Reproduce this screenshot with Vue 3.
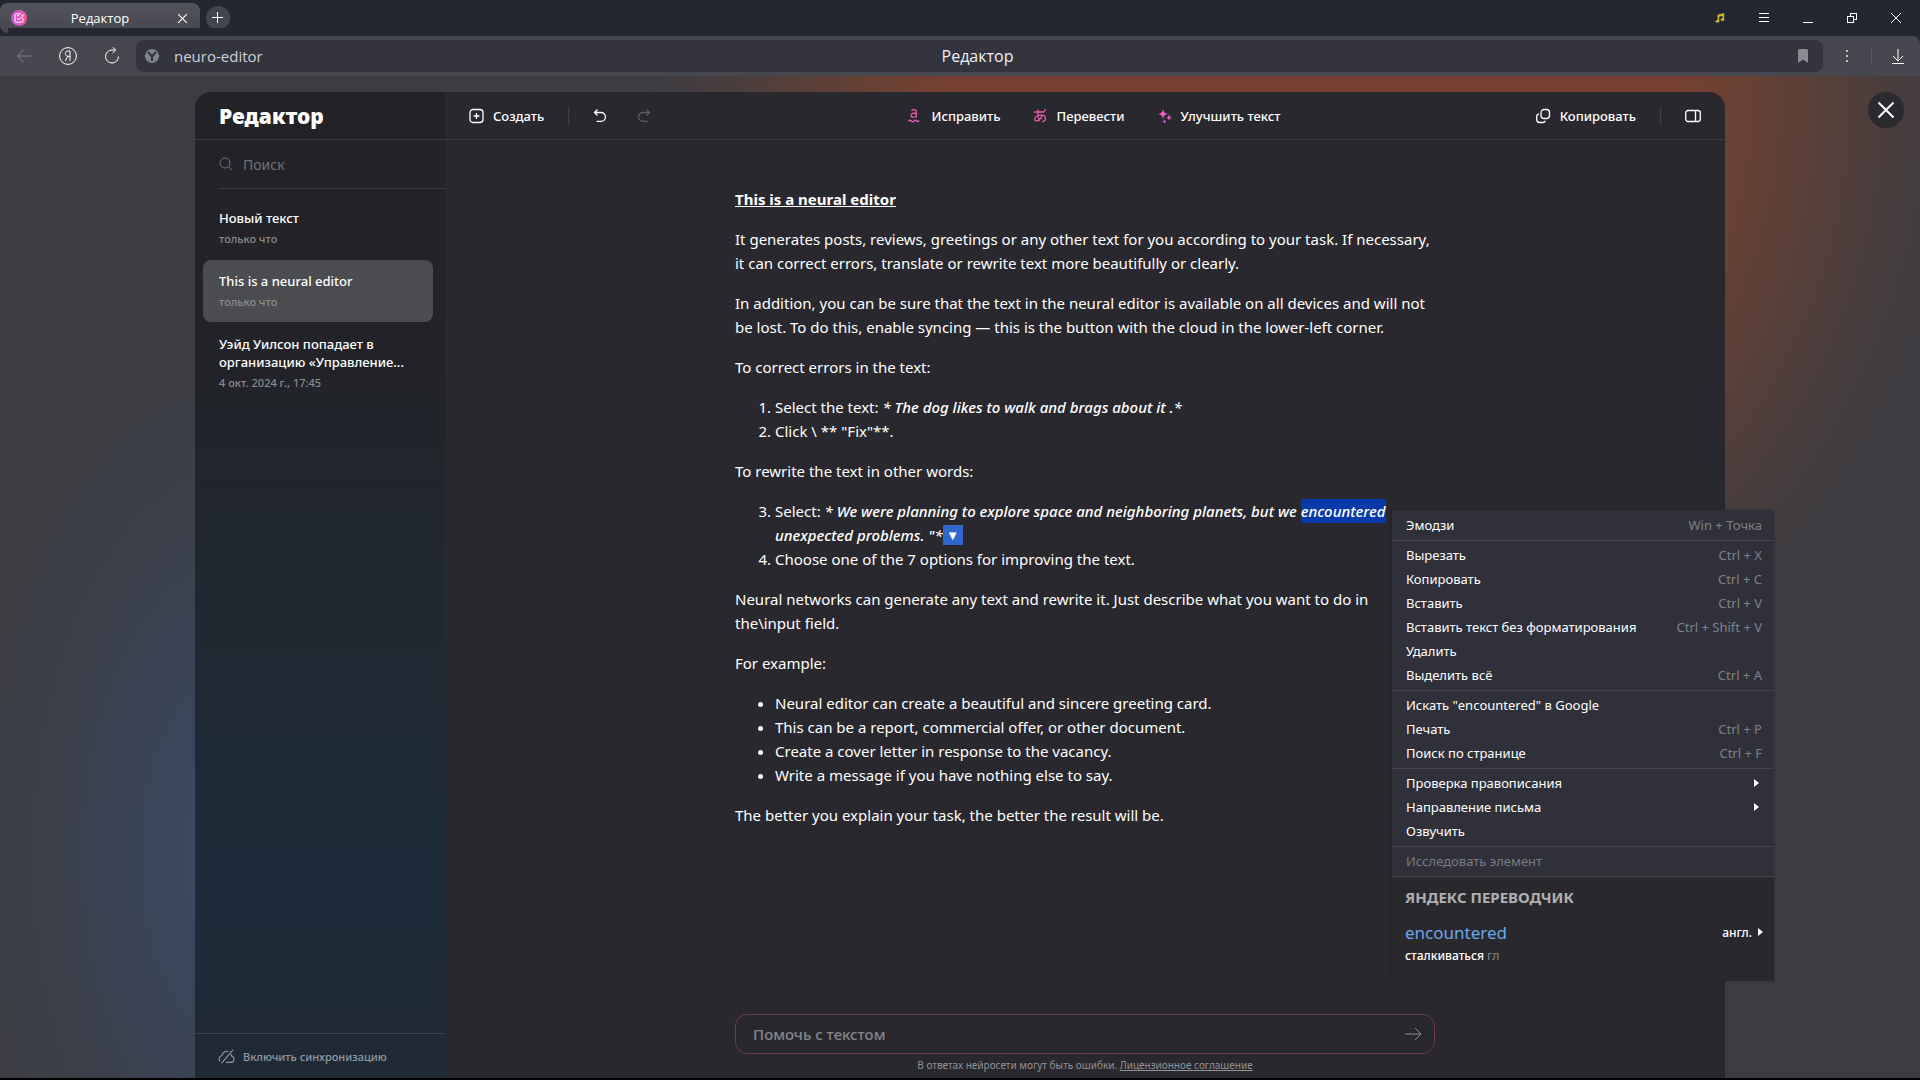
<template>
  <div class="page">
    <div class="titlebar">
      <div class="tab">
        <svg class="favicon" viewBox="0 0 16 16">
          <defs>
            <linearGradient id="fav" x1="0" y1="0" x2="1" y2="0">
              <stop offset="0" stop-color="#c455e0" />
              <stop offset="1" stop-color="#f7568f" />
            </linearGradient>
          </defs>
          <circle class="disc" cx="8" cy="8" r="8" />
          <path d="M12 8v3.2a1 1 0 0 1-1 1H5a1 1 0 0 1-1-1V4.8a1 1 0 0 1 1-1h5M6 5.8h2.4M6 8l1.8 2L13 4.4M10.6 4.6l1.4 1.6" />
        </svg>
        <span class="tab-title">Редактор</span>
        <button class="tab-close" aria-label="Закрыть вкладку">
          <svg viewBox="0 0 10 10"><path d="M1 1l8 8M9 1l-8 8" /></svg>
        </button>
      </div>
      <button class="new-tab" aria-label="Новая вкладка">
        <svg class="crisp" viewBox="0 0 12 12"><path d="M5.500 0v11M0 5.500h11" /></svg>
      </button>
      <div class="window-controls">
        <button aria-label="Музыка">
          <svg class="music" viewBox="0 0 12 12">
            <path d="M3 2.200L11 0v3L5 4.600V10H3z" />
            <path d="M9 2h2v6H9z" />
            <ellipse cx="3" cy="10" rx="2.200" ry="1.700" />
            <ellipse cx="9" cy="8" rx="2.200" ry="1.700" />
          </svg>
        </button>
        <button aria-label="Меню">
          <svg class="crisp" viewBox="0 0 12 12"><path d="M1 1.500h10M1 5.500h10M1 9.500h10" /></svg>
        </button>
        <button aria-label="Свернуть">
          <svg class="crisp" viewBox="0 0 12 12"><path d="M1 10.500h10" /></svg>
        </button>
        <button aria-label="Развернуть">
          <svg class="crisp" viewBox="0 0 12 12"><path d="M4.500 4V1.500h6v6H8M1.500 4.500h6v6h-6z" /></svg>
        </button>
        <button aria-label="Закрыть окно">
          <svg viewBox="0 0 12 12"><path d="M1 1l10 10M11 1L1 11" /></svg>
        </button>
      </div>
    </div>

    <div class="toolbar">
      <button class="nav back" aria-label="Назад">
        <svg viewBox="0 0 18 18"><path d="M16 9H3M8.500 3L2.500 9l6 6" /></svg>
      </button>
      <button class="nav" aria-label="Яндекс">
        <svg viewBox="0 0 18 18">
          <circle cx="9" cy="9" r="8.400" />
          <path d="M11 14V4H9.200C7.400 4 6.400 5 6.400 6.600S7.400 9.300 9 9.300h2M8.800 9.500L6.200 14" />
        </svg>
      </button>
      <button class="nav" aria-label="Обновить">
        <svg viewBox="0 0 18 18"><path d="M15.500 9.500A6.500 6.500 0 1 1 9 3h3.500M9.500 0l3.200 3-3.200 3" /></svg>
      </button>
      <div class="address">
        <svg class="site" viewBox="0 0 14 14">
          <circle cx="7" cy="7" r="7" />
          <path d="M3 3l4 4.500L11 3M7 7v5" />
        </svg>
        <input class="url" v-model="url" aria-label="Адрес">
        <span class="page-title">Редактор</span>
        <svg class="bookmark" viewBox="0 0 10 14"><path d="M1.500 0h7A1.500 1.500 0 0 1 10 1.500V14L5 10.500 0 14V1.500A1.500 1.500 0 0 1 1.500 0z" /></svg>
      </div>
      <button class="nav more" aria-label="Ещё">
        <svg viewBox="0 0 18 18"><path d="M8 3h2v2H8zM8 8h2v2H8zM8 13h2v2H8z" /></svg>
      </button>
      <span class="separator"></span>
      <button class="nav downloads" aria-label="Загрузки">
        <svg viewBox="0 0 18 18"><path d="M9 2v12M4 9l5 5 5-5M3 16.500h12" /></svg>
      </button>
    </div>

    <div class="stage">
      <main class="editor">
        <aside class="sidebar">
          <h1 class="brand">Редактор</h1>
          <label class="search">
            <svg viewBox="0 0 14 14"><circle cx="6" cy="6" r="5" /><path d="M9.700 9.700l3.500 3.500" /></svg>
            <input type="text" placeholder="Поиск" v-model="query" aria-label="Поиск">
          </label>
          <div class="docs">
            <button
              v-for="(doc, i) in docs"
              :key="doc.title"
              class="doc"
              :class="{ active: i === current }"
              @click="current = i"
            >
              <span class="doc-title">{{ doc.title }}</span>
              <span class="doc-date">{{ doc.date }}</span>
            </button>
          </div>
          <button class="sync">
            <svg viewBox="0 0 16 14"><path d="M7.500 12.500H12a3 3 0 0 0 .8-5.900 5 5 0 0 0-.6-1.900M10 2.200A5 5 0 0 0 3.700 6 3.300 3.300 0 0 0 2 11.600M14 .8L3.500 13.300" /></svg>
            Включить синхронизацию
          </button>
        </aside>

        <section class="workspace">
          <header class="actions">
            <div class="group">
              <button class="action">
                <svg viewBox="0 0 16 16"><rect x="1" y="1.500" width="13" height="13" rx="3" /><path d="M7.500 5v6M4.500 8h6" /></svg>
                Создать
              </button>
              <span class="divider"></span>
              <button class="action icon" aria-label="Отменить">
                <svg viewBox="0 0 16 16"><path d="M4.500 1.500l-3 3 3 3M1.500 4.500H8a4.400 4.400 0 0 1 0 8.800H3.500" /></svg>
              </button>
              <button class="action icon off" aria-label="Повторить">
                <svg viewBox="0 0 16 16"><path d="M9.500 1.500l3 3-3 3M12.500 4.500H6a4.400 4.400 0 0 0 0 8.800h4.500" /></svg>
              </button>
            </div>
            <div class="group tools">
              <button class="action">
                <svg class="pink" viewBox="0 0 16 16"><path d="M4.500 2.800C5.500 1.300 9.300 1 9.300 4v5.600M9.300 5C6.500 5 4 5.300 4 7.500c0 2.300 3.800 2.500 5.300 0M1.500 13q1.400-1.500 2.800 0t2.800 0 2.800 0 2.100-.5" /></svg>
                Исправить
              </button>
              <button class="action">
                <svg class="pink" viewBox="0 0 16 16"><path d="M1 4h10M5 1.500C4.700 6 5 10 6.600 13M9.500 6.500C8.500 10.500 5.500 13 3.500 13 1 13 1 9.500 4 8c3.500-1.800 8.500-1 8.500 2.200 0 2-1.200 3.200-3.400 3.500M12.500 1l-1.500 3" /></svg>
                Перевести
              </button>
              <button class="action">
                <svg class="pink sparkles" viewBox="0 0 16 16">
                  <path d="M6 1q.7 4.300 5 5-4.300.7-5 5-.7-4.300-5-5 4.300-.7 5-5z" />
                  <path d="M12 6.500q.4 2.600 3 3-2.600.4-3 3-.4-2.600-3-3 2.600-.4 3-3z" />
                  <path d="M7.500 11.500q.3 1.700 2 2-1.700.3-2 2-.3-1.700-2-2 1.700-.3 2-2z" />
                </svg>
                Улучшить текст
              </button>
            </div>
            <div class="group end">
              <button class="action">
                <svg viewBox="0 0 16 16"><rect x="5" y="1.500" width="8.500" height="9" rx="3" /><path d="M3 5.800A2.800 2.800 0 0 0 .7 8.500v3a3 3 0 0 0 3 3h2.600a3 3 0 0 0 3-1.600" /></svg>
                Копировать
              </button>
              <span class="divider"></span>
              <button class="action icon" aria-label="Боковая панель">
                <svg viewBox="0 0 16 16"><rect x=".7" y="2.500" width="14.600" height="11" rx="2.500" /><path d="M10.500 2.500v11" /></svg>
              </button>
            </div>
          </header>

          <article class="document">
            <p><strong>This is a neural editor</strong></p>
            <p>It generates posts, reviews, greetings or any other text for you according to your task. If necessary,<br>it can correct errors, translate or rewrite text more beautifully or clearly.</p>
            <p>In addition, you can be sure that the text in the neural editor is available on all devices and will not<br>be lost. To do this, enable syncing — this is the button with the cloud in the lower-left corner.</p>
            <p>To correct errors in the text:</p>
            <ol>
              <li>Select the text: <em>* The dog likes to walk and brags about it .*</em></li>
              <li>Click \ ** "Fix"**.</li>
            </ol>
            <p>To rewrite the text in other words:</p>
            <ol start="3">
              <li>Select: <em>* We were planning to explore space and neighboring planets, but we <mark>encountered</mark><br>unexpected problems. "*</em><button class="translate" aria-label="Перевод">▼</button></li>
              <li>Choose one of the 7 options for improving the text.</li>
            </ol>
            <p>Neural networks can generate any text and rewrite it. Just describe what you want to do in<br>the\input field.</p>
            <p>For example:</p>
            <ul>
              <li>Neural editor can create a beautiful and sincere greeting card.</li>
              <li>This can be a report, commercial offer, or other document.</li>
              <li>Create a cover letter in response to the vacancy.</li>
              <li>Write a message if you have nothing else to say.</li>
            </ul>
            <p>The better you explain your task, the better the result will be.</p>
          </article>

          <footer class="prompt">
            <form class="prompt-box" @submit.prevent>
              <input type="text" placeholder="Помочь с текстом" v-model="prompt" aria-label="Помочь с текстом">
              <button aria-label="Отправить">
                <svg viewBox="0 0 18 16"><path d="M1 8h16M11 2l6 6-6 6" /></svg>
              </button>
            </form>
            <p class="legal">В ответах нейросети могут быть ошибки. <a href="#">Лицензионное соглашение</a></p>
          </footer>
        </section>
      </main>
      <button class="close" aria-label="Закрыть">
        <svg viewBox="0 0 18 18"><path d="M1.500 1.500l15 15M16.500 1.500l-15 15" /></svg>
      </button>
    </div>

    <div class="context-menu" role="menu">
      <div v-for="(group, g) in menu" :key="g" class="menu-group">
        <button
          v-for="item in group"
          :key="item.label"
          class="menu-item"
          role="menuitem"
          :disabled="item.disabled"
        >
          <span>{{ item.label }}</span>
          <span v-if="item.keys" class="keys">{{ item.keys }}</span>
          <span v-if="item.sub" class="arrow"></span>
        </button>
      </div>
      <div class="translator">
        <h2>ЯНДЕКС ПЕРЕВОДЧИК</h2>
        <div class="word">
          <a href="#">encountered</a>
          <button class="lang">англ.<span class="arrow"></span></button>
        </div>
        <p class="meaning">сталкиваться <span>гл</span></p>
      </div>
    </div>
  </div>
</template>

<script setup>
import { ref } from 'vue'

const url = ref('neuro-editor')
const query = ref('')
const prompt = ref('')
const current = ref(1)

const docs = [
  { title: 'Новый текст', date: 'только что' },
  { title: 'This is a neural editor', date: 'только что' },
  { title: 'Уэйд Уилсон попадает в организацию «Управление...', date: '4 окт. 2024 г., 17:45' }
]

const menu = [
  [{ label: 'Эмодзи', keys: 'Win + Точка' }],
  [
    { label: 'Вырезать', keys: 'Ctrl + X' },
    { label: 'Копировать', keys: 'Ctrl + C' },
    { label: 'Вставить', keys: 'Ctrl + V' },
    { label: 'Вставить текст без форматирования', keys: 'Ctrl + Shift + V' },
    { label: 'Удалить' },
    { label: 'Выделить всё', keys: 'Ctrl + A' }
  ],
  [
    { label: 'Искать "encountered" в Google' },
    { label: 'Печать', keys: 'Ctrl + P' },
    { label: 'Поиск по странице', keys: 'Ctrl + F' }
  ],
  [
    { label: 'Проверка правописания', sub: true },
    { label: 'Направление письма', sub: true },
    { label: 'Озвучить' }
  ],
  [{ label: 'Исследовать элемент', disabled: true }]
]
</script>

<style>
body {
  background: #000;
}
</style>

<style scoped>
* {
  box-sizing: border-box;
}

.page {
  position: relative;
  display: flex;
  flex-direction: column;
  min-height: 100vh;
  padding-bottom: 2px;
  color: #fff;
  font-family: "Noto Sans", sans-serif;
  font-size: 14px;
}

button,
input {
  margin: 0;
  padding: 0;
  border: 0;
  outline: 0;
  background: none;
  color: inherit;
  font: inherit;
}

svg {
  flex: none;
  fill: none;
  stroke: currentColor;
}

/* Browser chrome */
.titlebar {
  display: flex;
  align-items: center;
  height: 36px;
  background: #242630;
}

.tab {
  display: flex;
  align-items: center;
  width: 200px;
  height: 30px;
  padding: 0 12px 0 11px;
  border-radius: 8px;
  background: linear-gradient(#54545c, #46464f);
}

.favicon {
  width: 16px;
  height: 16px;
}

.disc {
  fill: url(#fav);
  stroke: none;
}

.tab-title {
  flex: 1;
  padding-right: 4px;
  text-align: center;
  font-family: "Open Sans", sans-serif;
  font-size: 13px;
}

.tab-close {
  display: flex;
}

.tab-close svg {
  width: 11px;
  height: 11px;
}

.new-tab {
  display: grid;
  place-items: center;
  width: 24px;
  height: 24px;
  margin-left: 6px;
  border-radius: 50%;
  background: #43464f;
}

.new-tab svg {
  width: 12px;
  height: 12px;
}

.window-controls {
  display: flex;
  margin-left: auto;
  padding-right: 2px;
}

.window-controls button {
  display: grid;
  place-items: center;
  width: 44px;
  height: 36px;
}

.window-controls svg {
  width: 12px;
  height: 12px;
}

.crisp {
  shape-rendering: crispEdges;
}

.window-controls .music {
  width: 10px;
  height: 10px;
  fill: #c9b62c;
  stroke: none;
  overflow: visible;
}

.toolbar {
  display: flex;
  align-items: center;
  height: 40px;
  padding-left: 2px;
  border-top-right-radius: 8px;
  background: #474750;
  box-shadow: 8px -8px 0 #242630;
}

.nav {
  display: grid;
  place-items: center;
  width: 44px;
  height: 40px;
}

.nav svg {
  width: 18px;
  height: 18px;
}

.back {
  color: #85858c;
}

.address {
  display: grid;
  flex: 1;
  grid-template-columns: 38px 1fr auto 1fr 42px;
  align-items: center;
  height: 32px;
  margin-left: 2px;
  border-radius: 8px;
  background: #33343d;
  font-family: "Open Sans", sans-serif;
  font-size: 15px;
  line-height: 20px;
  color: #d2d3d8;
}

.site {
  width: 14px;
  height: 14px;
  margin-left: 9px;
}

.site circle {
  fill: #7e8490;
  stroke: none;
}

.site path {
  stroke: #30333d;
  stroke-width: 2;
}

.url {
  min-width: 0;
}

.page-title {
  color: #f0f0f2;
  font-size: 16px;
}

.bookmark {
  grid-column: 5;
  width: 10px;
  height: 14px;
  margin-left: 17px;
  fill: #8b8b91;
  stroke: none;
}

.more {
  width: 48px;
}

.more svg {
  fill: #c4c4c8;
  stroke: none;
}

.separator {
  width: 1px;
  height: 18px;
  margin-right: 4px;
  background: #5a5a63;
}

/* Page area */
.stage {
  position: relative;
  display: flex;
  flex: 1;
  padding: 16px 195px 0;
  background:
    radial-gradient(660px 680px at 1310px 20px, #75402f 0%, #75402f 55%, rgba(113, 66, 48, 0.85) 65%, rgba(100, 64, 52, 0.3) 88%, rgba(90, 62, 58, 0) 100%),
    radial-gradient(340px 640px at 240px 780px, #3b4a66 0%, rgba(57, 70, 92, 0.75) 35%, rgba(58, 66, 78, 0.35) 65%, rgba(60, 60, 68, 0) 100%),
    #3d3c41;
}

.editor {
  display: flex;
  flex: 1;
  border-radius: 16px 16px 0 0;
  background: #29282e;
  overflow: hidden;
}

.sidebar {
  display: flex;
  flex-direction: column;
  width: 250px;
  background: linear-gradient(#232227 0%, #222329 28%, #1f2932 55%, #1d2b3a 80%, #202a35 100%);
}

.brand {
  display: flex;
  align-items: center;
  height: 48px;
  margin: 0;
  padding-left: 24px;
  border-bottom: 1px solid #3d3d42;
  font-size: 21px;
  font-weight: 900;
}

.search {
  display: flex;
  align-items: center;
  gap: 10px;
  height: 49px;
  margin-left: 24px;
  border-bottom: 1px solid #3d3d42;
  color: #77777b;
}

.search svg {
  width: 14px;
  height: 14px;
}

.search input {
  min-width: 0;
}

.search input::placeholder {
  color: #707074;
  opacity: 1;
}

.docs {
  display: flex;
  flex: 1;
  flex-direction: column;
  gap: 1px;
  padding: 8px 12px 0 8px;
}

.doc {
  padding: 12px 16px;
  border-radius: 8px;
  text-align: left;
}

.doc.active {
  background: #4b4c4f;
}

.doc-title {
  display: block;
  font-size: 13px;
  font-weight: 500;
  line-height: 18px;
}

.doc-date {
  display: block;
  padding-top: 3px;
  color: #8b8c90;
  font-size: 11px;
  font-weight: 500;
  line-height: 17px;
}

.sync {
  display: flex;
  align-items: center;
  gap: 8px;
  height: 45px;
  padding-left: 23px;
  border-top: 1px solid #36424e;
  color: #929aa3;
  font-size: 11px;
  font-weight: 500;
}

.sync svg {
  width: 17px;
  height: 15px;
}

.workspace {
  display: flex;
  flex: 1;
  flex-direction: column;
  min-width: 0;
}

.actions {
  display: grid;
  grid-template-columns: 1fr auto 1fr;
  align-items: center;
  height: 48px;
  padding: 0 24px;
  border-bottom: 1px solid #3a3a40;
}

.group {
  display: flex;
  align-items: center;
}

.tools {
  gap: 32px;
  padding-left: 18px;
}

.end {
  justify-content: flex-end;
}

.action {
  display: flex;
  align-items: center;
  gap: 8px;
  font-size: 13px;
  font-weight: 500;
}

.action svg {
  width: 16px;
  height: 16px;
  stroke-width: 1.3;
}

.divider {
  width: 1px;
  height: 18px;
  margin: 0 24px;
  background: #3f3f45;
}

.icon + .icon {
  margin-left: 28px;
}

.icon.off {
  color: #5f5f64;
}

.pink {
  color: #e45ab0;
}

.sparkles {
  fill: #e85bc4;
  stroke: none;
}

.document {
  flex: 1;
  width: 700px;
  margin: 0 auto;
  padding-top: 47px;
  font-size: 15px;
  line-height: 24px;
}

.document p,
.document ol,
.document ul {
  margin: 0 0 16px;
}

.document strong {
  text-decoration: underline;
}

.document em {
  font-weight: 500;
}

.document ol,
.document ul {
  padding-left: 40px;
}

.document mark {
  display: inline-block;
  background: #083aa9;
  color: #fff;
}

.document li {
  white-space: nowrap;
}

.translate {
  width: 20px;
  height: 20px;
  margin-top: 2px;
  background: #2f67cd;
  font-size: 13px;
  line-height: 20px;
  vertical-align: top;
}

.prompt {
  width: 700px;
  margin: 0 auto;
}

.prompt-box {
  display: flex;
  align-items: center;
  height: 40px;
  padding: 0 12px 0 17px;
  border: 1px solid #6b3b50;
  border-radius: 12px;
}

.prompt-box input {
  flex: 1;
  font-size: 15px;
  font-weight: 500;
}

.prompt-box input::placeholder {
  color: #85858a;
  opacity: 1;
}

.prompt-box button {
  display: flex;
  color: #8b8b90;
}

.prompt-box svg {
  width: 18px;
  height: 16px;
}

.legal {
  margin: 4px 0 5px;
  color: #929297;
  font-size: 10px;
  line-height: 15px;
  text-align: center;
}

.legal a {
  color: inherit;
}

.close {
  position: absolute;
  top: 16px;
  right: 16px;
  display: grid;
  place-items: center;
  width: 36px;
  height: 36px;
  border-radius: 50%;
  background: #2a2a2f;
}

.close svg {
  width: 18px;
  height: 18px;
  stroke-width: 2;
}

/* Context menu */
.context-menu {
  position: absolute;
  top: 510px;
  left: 1392px;
  width: 382px;
  background: #2f303a;
  box-shadow: 0 0 4px rgba(0, 0, 0, 0.2);
  font-size: 13px;
}

.menu-group {
  padding: 2px 0 3px;
  border-bottom: 1px solid #44454f;
}

.menu-group:first-child {
  padding-top: 3px;
}

.menu-item {
  display: flex;
  align-items: center;
  justify-content: space-between;
  width: 100%;
  height: 24px;
  padding: 0 12px 0 14px;
}

.menu-item:disabled {
  color: #7a7b82;
}

.keys {
  color: #808188;
}

.arrow {
  border: 4px solid transparent;
  border-right-width: 0;
  border-left: 5px solid #fff;
}

.menu-item .arrow {
  margin-right: 3px;
}

.translator {
  padding: 9px 11px 13px 13px;
  background: #29282d;
}

.translator h2 {
  margin: 0 0 12px;
  color: #b0b0b3;
  font-size: 15px;
  font-weight: 700;
  line-height: 22px;
}

.word {
  display: flex;
  align-items: center;
  justify-content: space-between;
  height: 24px;
}

.word a {
  color: #69a9ec;
  font-size: 17px;
  text-decoration: none;
}

.lang {
  display: flex;
  align-items: center;
  gap: 6px;
  font-size: 12px;
  font-weight: 500;
}

.meaning {
  margin: 0;
  font-size: 12px;
  font-weight: 500;
  line-height: 24px;
}

.meaning span {
  color: #7d7d82;
}
</style>
